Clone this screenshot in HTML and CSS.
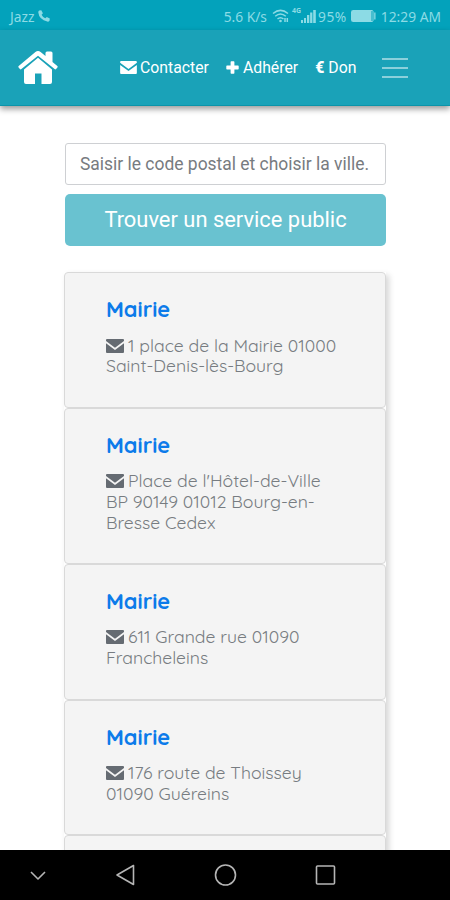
FILE: index.html
```html
<!DOCTYPE html>
<html lang="fr">
<head>
    <meta charset="UTF-8">
    <meta name="viewport" content="width=device-width, initial-scale=1">
    <title>Trouver un service public</title>
    <link rel="stylesheet" href="styles.css">
</head>
<body>
    <!-- Icônes partagées -->
    <svg class="sprite" width="0" height="0">
        <symbol id="mail" viewBox="0 0 18 14">
            <path d="M1 0h16q1 0 1 1v1L9 8.700 0 2V1q0-1 1-1zM0 4.300l9 6.600 9-6.600V13q0 1-1 1H1q-1 0-1-1z"/>
        </symbol>
    </svg>

    <div class="status-bar">
        <span class="carrier">Jazz</span>
        <svg class="phone" viewBox="0 0 12 12"><path d="M1.200.5 3.300.2 4.900 3.300 3.600 4.700Q4.800 7.300 7.300 8.300L8.800 7l3 1.500-.3 2.200Q10.800 11.800 9.300 11.600 1.200 9.900.3 2.600.2 1.100 1.200.5z"/></svg>
        <span class="speed">5.6 K/s</span>
        <svg class="wifi" viewBox="0 0 17 14">
            <path d="M1 4.500Q8.500-1.800 16 4.500M3.200 7.300q5.300-4.600 10.600 0M5.500 10q3-2.600 6 0"/>
            <circle cx="8.500" cy="12" r="1.300"/>
            <path d="M13 9v4M15.300 9v4"/>
        </svg>
        <span class="network">4G</span>
        <svg class="signal" viewBox="0 0 15 13"><path d="M0 10h2v3H0zM3 8h2v5H3zM6 5h2.300v8H6zM9.100 2.500h2.300v10.500H9.100zM12.200 0h2.600v13h-2.600z"/></svg>
        <span class="percent">95%</span>
        <svg class="battery" viewBox="0 0 25 12">
            <rect x=".5" y=".5" width="21.500" height="11" rx="1"/>
            <path d="M1 1h19.500v10H1z"/>
            <path d="M23.200 2.500h1.300v7h-1.300z"/>
        </svg>
        <span class="clock">12:29 AM</span>
    </div>

    <header class="navbar">
        <a class="home" href="#">
            <svg viewBox="0 0 40 34"><path d="M20 6.700 34 18.400V31q0 2-2 2h-8.500V22.500h-6.500V33H8q-2 0-2-2V18.400z"/><path d="M20 0q1.400 0 2.600 1l4.900 4.100V2q0-1.500 1.500-1.500h4Q34.500.5 34.500 2v9l4.800 3.900q.8.700.1 1.500l-1.300 1.600q-.7.800-1.500.1L20 4.800 3.400 18.100q-.8.700-1.500-.1L.6 16.400q-.7-.8.1-1.500L17.400 1Q18.600 0 20 0z"/></svg>
        </a>
        <nav class="links">
            <a href="#" class="contact"><svg class="icon-mail"><use href="#mail"/></svg>Contacter</a>
            <a href="#" class="join"><svg class="icon-plus" viewBox="0 0 13 13"><path d="M4.600 1q0-.7.700-.7h2.400q.7 0 .7.700v3.600H12q.7 0 .7.700v2.400q0 .7-.7.700H8.400V12q0 .7-.7.700H5.300q-.7 0-.7-.7V8.400H1q-.7 0-.7-.7V5.300q0-.7.700-.7h3.600z"/></svg>Adhérer</a>
            <a href="#" class="give"><b>€</b>Don</a>
        </nav>
        <button class="menu-btn" aria-label="Menu"><span></span><span></span><span></span></button>
    </header>

    <main class="content">
        <form class="search">
            <input type="text" placeholder="Saisir le code postal et choisir la ville.">
            <button type="button">Trouver un service public</button>
        </form>

        <div class="results">
            <div class="card">
                <h2><a href="#">Mairie</a></h2>
                <p><svg class="icon-mail"><use href="#mail"/></svg>1 place de la Mairie 01000<br>Saint-Denis-lès-Bourg</p>
            </div>
            <div class="card">
                <h2><a href="#">Mairie</a></h2>
                <p><svg class="icon-mail"><use href="#mail"/></svg>Place de l'Hôtel-de-Ville<br>BP 90149 01012 Bourg-en-<br>Bresse Cedex</p>
            </div>
            <div class="card">
                <h2><a href="#">Mairie</a></h2>
                <p><svg class="icon-mail"><use href="#mail"/></svg>611 Grande rue 01090<br>Francheleins</p>
            </div>
            <div class="card">
                <h2><a href="#">Mairie</a></h2>
                <p><svg class="icon-mail"><use href="#mail"/></svg>176 route de Thoissey<br>01090 Guéreins</p>
            </div>
            <div class="card"></div>
        </div>
    </main>

    <footer class="system-nav">
        <svg viewBox="0 0 450 50">
            <path d="M31 22l7 7 7-7"/>
            <path d="M133.500 15.500v19l-16.500-9.500z"/>
            <circle cx="225.500" cy="25" r="10"/>
            <rect x="316.500" y="16" width="18" height="18" rx="1"/>
        </svg>
    </footer>
</body>
</html>
```
FILE: styles.css
```css
* {
    box-sizing: border-box;
}

body {
    margin: 0;
    height: 900px;
    display: flex;
    flex-direction: column;
    overflow: hidden;
    background-color: #fff;
    font-family: Roboto, sans-serif;
}

a {
    color: inherit;
    text-decoration: none;
}

.sprite {
    position: absolute;
}

/* Status bar */
.status-bar {
    flex: none;
    height: 30px;
    padding: 2px 9px 0 10px;
    display: flex;
    align-items: center;
    background-color: #03a2bb;
    color: #8cdbe5;
    fill: #8cdbe5;
    font-family: "Noto Sans", sans-serif;
    font-size: 13.8px;
    white-space: nowrap;
}

.phone {
    width: 12px;
    height: 12px;
    margin-left: 4px;
}

.speed {
    margin-left: auto;
}

.wifi {
    width: 17px;
    height: 14px;
    margin-left: 5px;
}

.wifi path {
    fill: none;
    stroke: #8cdbe5;
    stroke-width: 1.5;
}

.network {
    margin-left: 3px;
    align-self: flex-start;
    font-size: 7px;
    font-weight: bold;
    line-height: 17px;
}

.signal {
    width: 15px;
    height: 13px;
}

.percent {
    margin-left: 2px;
    letter-spacing: 0.5px;
}

.battery {
    width: 25px;
    height: 12px;
    margin: 0 5px 0 4px;
}

.battery rect {
    fill: none;
    stroke: #8cdbe5;
}

/* Navbar */
.navbar {
    position: relative;
    flex: none;
    height: 76px;
    padding: 0 42px 0 18px;
    display: flex;
    align-items: center;
    background-color: #1aa2b8;
    border-bottom: 1px solid #0b94aa;
    box-shadow: 0 3px 6px rgba(0, 0, 0, 0.4);
    color: #fff;
    fill: #fff;
}

.home svg {
    display: block;
    width: 40px;
    height: 34px;
}

.links {
    margin-left: 62px;
    display: flex;
    font-size: 15.8px;
    line-height: 20px;
    white-space: nowrap;
}

.links a {
    display: flex;
    align-items: center;
}

.links .icon-mail {
    width: 17px;
    height: 13px;
    margin-right: 3px;
}

.icon-plus {
    width: 13px;
    height: 13px;
    margin-right: 4px;
}

.join,
.give {
    margin-left: 17px;
}

.give b {
    margin-right: 4px;
    font-weight: 900;
}

.menu-btn {
    width: 26px;
    margin-left: auto;
    padding: 1px 0 0;
    display: flex;
    flex-direction: column;
    gap: 7px;
    background: none;
    border: none;
}

.menu-btn span {
    height: 2px;
    background-color: #8bd0db;
}

/* Search */
.content {
    flex: 1;
    min-height: 0;
    overflow: hidden;
    padding: 37px 64px 0;
}

.search {
    display: flex;
    flex-direction: column;
    gap: 9px;
    padding: 0 0 0 1px;
}

.search input {
    height: 42px;
    padding: 0 14px;
    border: 1px solid #ced0d3;
    border-radius: 3px;
    font-family: Roboto, sans-serif;
    font-size: 17.45px;
}

.search input::placeholder {
    color: #777b80;
}

.search button {
    height: 52px;
    padding: 0 0 2px;
    border: none;
    border-radius: 5px;
    background-color: #69c2d0;
    color: #fff;
    font-family: Roboto, sans-serif;
    font-size: 21.9px;
}

/* Results */
.results {
    margin-top: 26px;
    box-shadow: 3px 3px 6px rgba(0, 0, 0, 0.16);
}

.card {
    min-height: 135.7px;
    padding: 22px 41px 30.7px;
    border: 1px solid #d9d9d9;
    border-radius: 4px;
    background-color: #f4f4f4;
    font-family: Quicksand, Lato, sans-serif;
}

.card h2 {
    margin: 0 0 12.5px;
    color: #0c7bea;
    font-size: 21.8px;
    font-weight: 700;
    line-height: 27px;
}

.card p {
    margin: 0;
    color: #777c81;
    font-size: 17.6px;
    font-weight: 450;
    line-height: 20.7px;
    white-space: nowrap;
}

.card .icon-mail {
    width: 18px;
    height: 14px;
    margin-right: 4px;
    vertical-align: -1px;
    fill: #656b72;
}

/* Android navigation */
.system-nav {
    flex: none;
    height: 50px;
    background-color: #000;
}

.system-nav svg {
    display: block;
    width: 450px;
    height: 50px;
    fill: none;
    stroke: #b5b5b5;
    stroke-width: 1.6;
    stroke-linejoin: round;
}
```
